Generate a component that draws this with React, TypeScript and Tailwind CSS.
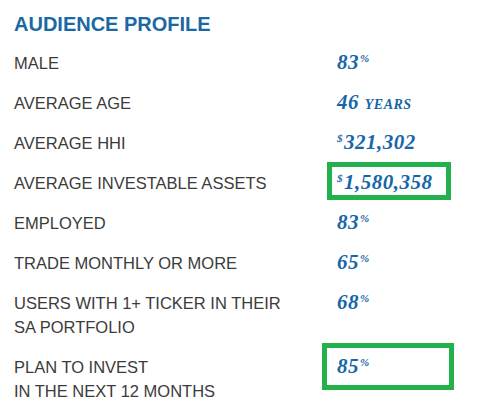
import React from 'react';

type Row = {
  label: string[];
  value: React.ReactNode;
  box?: 'small' | 'wide';
};

const Pct: React.FC<{ n: string }> = ({ n }) => (
  <span>
    {n}
    <span className="relative -top-[7px] ml-[1px] text-[11px] leading-none">%</span>
  </span>
);

const Usd: React.FC<{ n: string }> = ({ n }) => (
  <span>
    <span className="relative -top-[7px] mr-[1px] text-[11px] leading-none">$</span>
    {n}
  </span>
);

const rows: Row[] = [
  { label: ['MALE'], value: <Pct n="83" /> },
  {
    label: ['AVERAGE AGE'],
    value: (
      <span>
        46 <span className="text-[14px] leading-none">YEARS</span>
      </span>
    ),
  },
  { label: ['AVERAGE HHI'], value: <Usd n="321,302" /> },
  { label: ['AVERAGE INVESTABLE ASSETS'], value: <Usd n="1,580,358" />, box: 'small' },
  { label: ['EMPLOYED'], value: <Pct n="83" /> },
  { label: ['TRADE MONTHLY OR MORE'], value: <Pct n="65" /> },
  { label: ['USERS WITH 1+ TICKER IN THEIR', 'SA PORTFOLIO'], value: <Pct n="68" /> },
  { label: ['PLAN TO INVEST', 'IN THE NEXT 12 MONTHS'], value: <Pct n="85" />, box: 'wide' },
];

const App: React.FC = () => {
  return (
    <div className="h-[419px] w-[494px] overflow-hidden bg-white pl-[14px] pt-[10px] font-['Liberation_Sans',Arial,sans-serif]">
      <h2 className="text-[20px] font-bold leading-[28px] text-[#1a69a4]">AUDIENCE PROFILE</h2>

      <div className="mt-[13px] flex flex-col gap-[16px]">
        {rows.map((row) => (
          <div key={row.label[0]} className="grid grid-cols-[323px_1fr] items-start">
            <div className="text-[16.5px] leading-[24px] text-[#3b3b3b]">
              {row.label.map((l) => (
                <div key={l}>{l}</div>
              ))}
            </div>
            <div className="relative h-[24px]">
              <div className="h-[24px] whitespace-nowrap font-['Liberation_Serif',serif] text-[21px] font-bold italic leading-[22px] tracking-[0.5px] text-[#1767a8]">
                {row.value}
              </div>
              {row.box === 'small' && (
                <div className="absolute left-[-10px] top-[-9px] h-[38px] w-[124px] border-[5px] border-[#22b14c]" />
              )}
              {row.box === 'wide' && (
                <div className="absolute left-[-15px] top-[-12px] h-[47px] w-[132px] border-[5px] border-[#22b14c]" />
              )}
            </div>
          </div>
        ))}
      </div>
    </div>
  );
};

export default App;
